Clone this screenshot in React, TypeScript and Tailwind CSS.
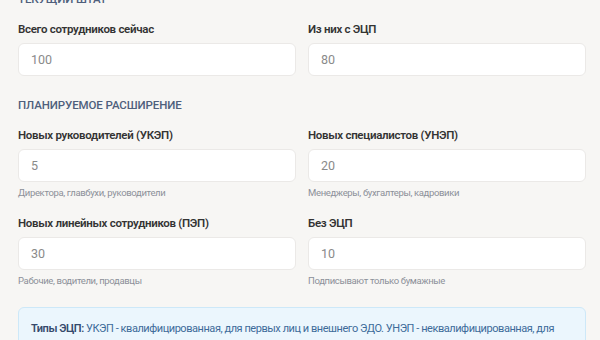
import React from 'react';

type Field = {
  label: string;
  value: string;
  hint?: string;
};

const current: Field[] = [
  { label: 'Всего сотрудников сейчас', value: '100' },
  { label: 'Из них с ЭЦП', value: '80' },
];

const planned: Field[] = [
  { label: 'Новых руководителей (УКЭП)', value: '5', hint: 'Директора, главбухи, руководители' },
  { label: 'Новых специалистов (УНЭП)', value: '20', hint: 'Менеджеры, бухгалтеры, кадровики' },
  { label: 'Новых линейных сотрудников (ПЭП)', value: '30', hint: 'Рабочие, водители, продавцы' },
  { label: 'Без ЭЦП', value: '10', hint: 'Подписывают только бумажные' },
];

function NumberField({ field }: { field: Field }) {
  return (
    <div className="flex flex-col">
      <label className="mb-1 text-[11.5px] leading-5 font-semibold tracking-[-0.3px] text-[#333333]">
        {field.label}
      </label>
      <input
        type="text"
        defaultValue={field.value}
        className="h-[33px] w-full rounded-md border border-[#ebe9e7] bg-white px-3 text-[12.5px] text-[#8a8a8a] outline-none"
      />
      {field.hint && (
        <p className="mt-1 text-[9.5px] leading-[14px] tracking-[-0.35px] text-[#8c9099]">{field.hint}</p>
      )}
    </div>
  );
}

function SectionTitle({ children }: { children: React.ReactNode }) {
  return (
    <h3 className="mb-3 text-[11.5px] leading-4 font-medium uppercase tracking-[-0.1px] text-[#4f5f7c]">
      {children}
    </h3>
  );
}

export default function App() {
  return (
    <div className="h-[340px] w-[600px] overflow-hidden bg-[#f7f6f4] font-['Roboto',sans-serif]">
      <div className="-mt-[9px] pl-[18px] pr-[14px]">
        <SectionTitle>Текущий штат</SectionTitle>
        <div className="grid grid-cols-2 gap-x-3">
          {current.map((f) => (
            <NumberField key={f.label} field={f} />
          ))}
        </div>

        <div className="mt-[21px]">
          <SectionTitle>Планируемое расширение</SectionTitle>
          <div className="grid grid-cols-2 gap-x-3 gap-y-[13px]">
            {planned.map((f) => (
              <NumberField key={f.label} field={f} />
            ))}
          </div>
        </div>

        <div className="mt-[19px] rounded-md border border-[#cde8f8] bg-[#ebf6fd] px-3 pt-[11px] pb-3 text-[11px] leading-5 tracking-[-0.45px] text-[#3d6b9a]">
          <span className="font-semibold text-[#34496b]">Типы ЭЦП:</span> УКЭП - квалифицированная, для первых лиц и
          внешнего ЭДО. УНЭП - неквалифицированная, для внутреннего документооборота. ПЭП - простая, для кадровых
          документов.
        </div>
      </div>
    </div>
  );
}
